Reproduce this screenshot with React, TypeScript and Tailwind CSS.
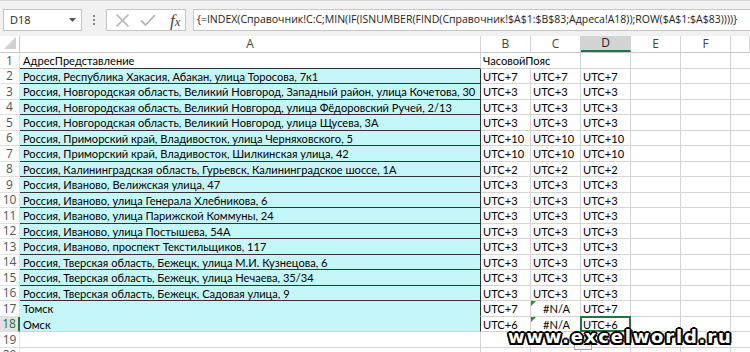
import React from "react";

const rows: [string, string, string, string][] = [
  ["АдресПредставление", "ЧасовойПояс", "", ""],
  ["Россия, Республика Хакасия, Абакан, улица Торосова, 7к1", "UTC+7", "UTC+7", "UTC+7"],
  ["Россия, Новгородская область, Великий Новгород, Западный район, улица Кочетова, 30", "UTC+3", "UTC+3", "UTC+3"],
  ["Россия, Новгородская область, Великий Новгород, улица Фёдоровский Ручей, 2/13", "UTC+3", "UTC+3", "UTC+3"],
  ["Россия, Новгородская область, Великий Новгород, улица Щусева, 3А", "UTC+3", "UTC+3", "UTC+3"],
  ["Россия, Приморский край, Владивосток, улица Черняховского, 5", "UTC+10", "UTC+10", "UTC+10"],
  ["Россия, Приморский край, Владивосток, Шилкинская улица, 42", "UTC+10", "UTC+10", "UTC+10"],
  ["Россия, Калининградская область, Гурьевск, Калининградское шоссе, 1А", "UTC+2", "UTC+2", "UTC+2"],
  ["Россия, Иваново, Велижская улица, 47", "UTC+3", "UTC+3", "UTC+3"],
  ["Россия, Иваново, улица Генерала Хлебникова, 6", "UTC+3", "UTC+3", "UTC+3"],
  ["Россия, Иваново, улица Парижской Коммуны, 24", "UTC+3", "UTC+3", "UTC+3"],
  ["Россия, Иваново, улица Постышева, 54А", "UTC+3", "UTC+3", "UTC+3"],
  ["Россия, Иваново, проспект Текстильщиков, 117", "UTC+3", "UTC+3", "UTC+3"],
  ["Россия, Тверская область, Бежецк, улица М.И. Кузнецова, 6", "UTC+3", "UTC+3", "UTC+3"],
  ["Россия, Тверская область, Бежецк, улица Нечаева, 35/34", "UTC+3", "UTC+3", "UTC+3"],
  ["Россия, Тверская область, Бежецк, Садовая улица, 9", "UTC+3", "UTC+3", "UTC+3"],
  ["Томск", "UTC+7", "#N/A", "UTC+7"],
  ["Омск", "UTC+6", "#N/A", "UTC+6"],
  ["", "", "", ""],
  ["", "", "", ""],
];

const formula =
  "{=INDEX(Справочник!C:C;MIN(IF(ISNUMBER(FIND(Справочник!$A$1:$B$83;Адреса!A18));ROW($A$1:$A$83))))}";

function Toolbar() {
  return (
    <div className="h-[36px] bg-[#f1f1f1] border-t border-[#d8d8d8] flex items-start pt-[8px] pl-[3px] font-['Open_Sans',sans-serif] text-[#222]">
      {/* Name box */}
      <div className="w-[79px] h-[22px] bg-white border border-[#c6c6c6] flex items-center justify-between pl-[6px] pr-[5px] text-[11px]">
        <span>D18</span>
        <svg width="7" height="4" viewBox="0 0 7 4">
          <path d="M0 0h7L3.5 4z" fill="#555" />
        </svg>
      </div>
      {/* Separator dots */}
      <div className="w-[24px] h-[22px] flex flex-col items-center justify-center gap-[2px]">
        <span className="w-[2px] h-[2px] bg-[#888]" />
        <span className="w-[2px] h-[2px] bg-[#888]" />
        <span className="w-[2px] h-[2px] bg-[#888]" />
      </div>
      {/* Formula buttons */}
      <div className="w-[80px] h-[22px] bg-white border border-[#c6c6c6] flex items-center pl-[8px] gap-[10px]">
        <svg width="15" height="15" viewBox="0 0 15 15">
          <path d="M1.5 1.5l12 12M13.5 1.5l-12 12" stroke="#b3b3b3" strokeWidth="1.6" />
        </svg>
        <svg width="16" height="14" viewBox="0 0 16 14">
          <path d="M1 7.5l4.5 4.5L15 2" stroke="#b3b3b3" strokeWidth="1.8" fill="none" />
        </svg>
        <span className="ml-[4px] font-['Liberation_Serif',serif] italic text-[17px] leading-none text-[#444]">
          f<span className="text-[13px]">x</span>
        </span>
      </div>
      {/* Formula bar */}
      <div className="ml-[7px] flex-1 h-[22px] bg-white border border-[#c6c6c6] border-r-0 flex items-center pl-[3px] whitespace-nowrap overflow-hidden text-[10.5px]">
        {formula}
      </div>
    </div>
  );
}

const colHeads = [
  { l: "A", w: "w-[461px]" },
  { l: "B", w: "w-[50px]" },
  { l: "C", w: "w-[50px]" },
  { l: "D", w: "w-[50px]", sel: true },
  { l: "E", w: "w-[50px]" },
  { l: "F", w: "w-[50px]" },
  { l: "", w: "flex-1" },
];

function HeaderRow() {
  return (
    <div className="flex h-[17px] text-[12px] text-[#444] border-b border-[#c8c8c8] font-['Open_Sans',sans-serif]">
      <div className="w-[20px] shrink-0 border-r border-[#c8c8c8] relative">
        <svg className="absolute right-[3px] bottom-[3px]" width="12" height="12" viewBox="0 0 12 12">
          <path d="M12 0v12H0z" fill="#d0d0d0" />
        </svg>
      </div>
      {colHeads.map((c, i) => (
        <div
          key={i}
          className={`${c.w} shrink-0 border-r border-[#d4d4d4] flex items-center justify-center ${
            c.sel ? "bg-[#d3d3d3] border-b-2 border-b-[#217346] text-[#222]" : ""
          }`}
        >
          {c.l}
        </div>
      ))}
    </div>
  );
}

function DataRow({ r, i }: { r: [string, string, string, string]; i: number }) {
  const n = i + 1;
  const cyan = n >= 2 && n <= 18;
  const boxed = n >= 1 && n <= 16;
  const selRow = n === 18;
  return (
    <div className="flex h-[15.5px] leading-[15px]">
      <div
        className={`w-[20px] shrink-0 flex items-center justify-center text-[12px] font-['Open_Sans',sans-serif] border-b border-[#e0e0e0] ${
          selRow ? "bg-[#e1e1e1] text-[#217346] border-r-2 border-r-[#217346]" : "text-[#555] border-r border-[#c8c8c8]"
        }`}
      >
        {n}
      </div>
      <div
        className={`w-[461px] shrink-0 pl-[3px] whitespace-nowrap overflow-hidden border-r ${
          cyan ? "bg-[#c6f7f8] border-r-[#333]" : "border-r-[#d4d4d4]"
        } ${boxed ? "border-b border-b-[#333]" : n === 17 ? "border-b border-b-[#c6f7f8]" : "border-b border-b-[#d4d4d4]"}`}
      >
        {r[0]}
      </div>
      <div
        className={`w-[50px] shrink-0 pl-[2px] whitespace-nowrap border-b border-[#d4d4d4] ${
          n === 1 ? "overflow-visible relative z-10" : "border-r border-r-[#d4d4d4]"
        }`}
      >
        {r[1]}
      </div>
      <div
        className={`w-[50px] shrink-0 whitespace-nowrap border-r border-b border-[#d4d4d4] relative ${
          r[2] === "#N/A" ? "text-center pl-[2px]" : "pl-[2px]"
        }`}
      >
        {r[2] === "#N/A" && (
          <svg className="absolute left-0 top-0" width="5" height="5" viewBox="0 0 5 5">
            <path d="M0 0h5L0 5z" fill="#2e8b3a" />
          </svg>
        )}
        {r[2]}
      </div>
      <div className="w-[50px] shrink-0 pl-[2px] whitespace-nowrap border-r border-b border-[#d4d4d4] relative">
        {selRow && (
          <>
            <div className="absolute -left-[1px] -top-[1px] w-[51px] h-[16.5px] border-2 border-[#217346]" />
            <div className="absolute -right-[4px] -bottom-[4px] w-[6px] h-[6px] bg-[#217346] border border-white" />
          </>
        )}
        {r[3]}
      </div>
      <div className="w-[50px] shrink-0 border-r border-b border-[#d4d4d4]" />
      <div className="w-[50px] shrink-0 border-r border-b border-[#d4d4d4]" />
      <div className="flex-1 border-b border-[#d4d4d4]" />
    </div>
  );
}

export default function App() {
  return (
    <div className="w-[750px] h-[352px] overflow-hidden bg-white relative">
      <Toolbar />
      <HeaderRow />
      <div className="font-['Lato',sans-serif] text-[11.1px] text-black">
        {rows.map((r, i) => (
          <DataRow key={i} r={r} i={i} />
        ))}
      </div>
      {/* paste options */}
      <div className="absolute left-[574px] top-[339px] w-[18px] h-[11px] bg-[#f2f2f2] border border-[#aaa]" />
      {/* watermark */}
      <div className="absolute left-[508px] top-[328px] leading-none font-['DejaVu_Sans',sans-serif] font-bold text-[18px] tracking-[1.8px] text-white [text-shadow:-1.5px_-1.5px_0_#000,1.5px_-1.5px_0_#000,-1.5px_1.5px_0_#000,1.5px_1.5px_0_#000,0_2px_0_#000,0_-2px_0_#000,2px_0_0_#000,-2px_0_0_#000]">
        www.excelworld.ru
      </div>
    </div>
  );
}
